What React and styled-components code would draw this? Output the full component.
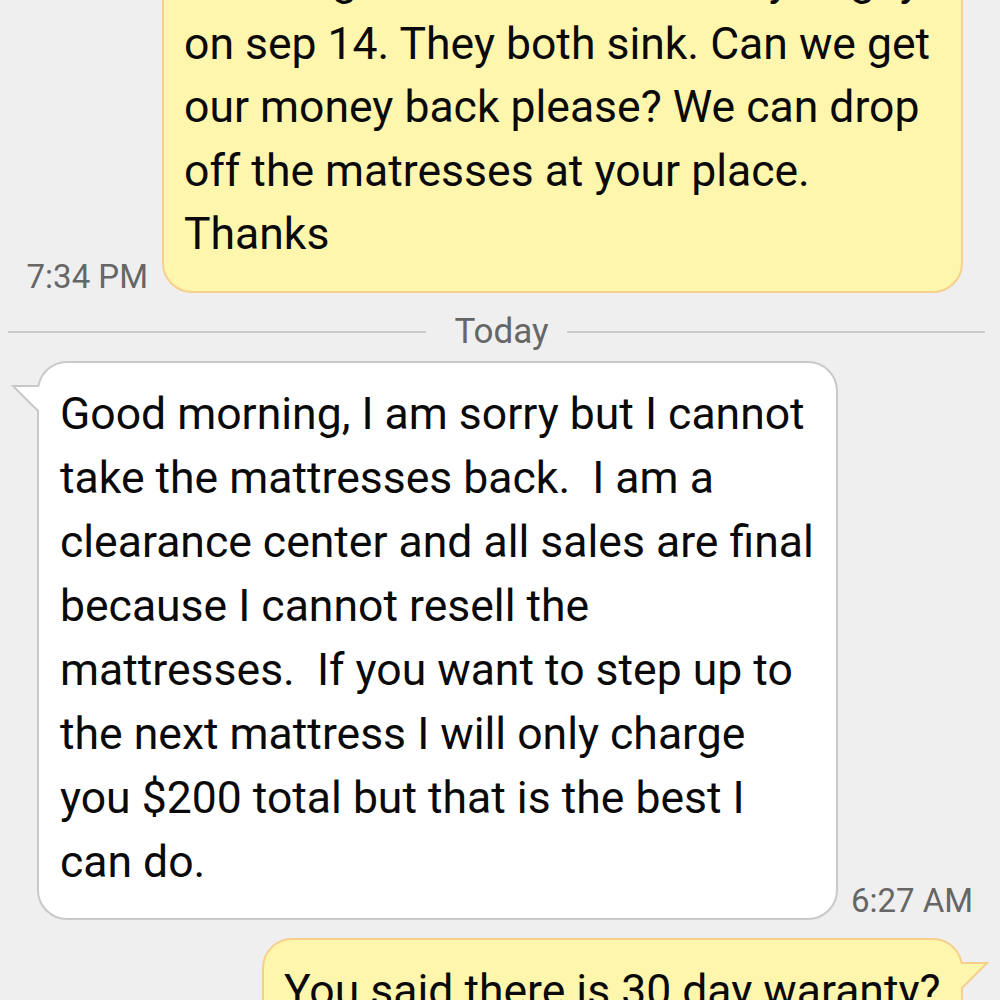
import React from "react";
import styled, { createGlobalStyle } from "styled-components";

const Global = createGlobalStyle`
  html, body { margin: 0; padding: 0; background: #efefef; }
  body { font-family: Roboto, "Noto Sans", Arial, sans-serif; overflow: hidden; }
`;

const Page = styled.div`
  width: 1000px;
  height: 1000px;
  overflow: hidden;
  display: flex;
  flex-direction: column;
`;

const Thread = styled.div`
  display: flex;
  flex-direction: column;
  margin-top: -73px;
`;

const Row = styled.div`
  display: flex;
  align-items: flex-end;
  gap: ${(p) => (p.$mine ? "14px" : "13px")};
  justify-content: ${(p) => (p.$mine ? "flex-end" : "flex-start")};
  padding: ${(p) => (p.$mine ? "0 37px 0 0" : "0 0 0 37px")};
  margin-top: ${(p) => p.$top || 0}px;
`;

const Bubble = styled.div`
  position: relative;
  box-sizing: border-box;
  width: ${(p) => (p.$width ? `${p.$width}px` : "auto")};
  padding: ${(p) => (p.$mine ? "20px 20px 24px 20px" : "19px 21px 24px 21px")};
  border-radius: 30px;
  border: 2px solid ${(p) => (p.$mine ? "#f6cf8c" : "#c9c9c9")};
  background: ${(p) => (p.$mine ? "#fff6ae" : "#ffffff")};
  color: #0a0a0a;
  font-size: 44.5px;
  line-height: ${(p) => (p.$mine ? "63.5px" : "64px")};
  white-space: pre;
`;

const Tail = styled.svg`
  position: absolute;
  top: 22px;
  ${(p) => (p.$mine ? "right: -28px; transform: scaleX(-1);" : "left: -28px;")}
  width: 28px;
  height: 28px;
  overflow: visible;
`;

const Time = styled.div`
  font-size: 33px;
  line-height: 32px;
  color: #666666;
  margin-bottom: ${(p) => p.$drop || 0}px;
  white-space: nowrap;
`;

const Divider = styled.div`
  display: grid;
  grid-template-columns: 1fr auto 1fr;
  align-items: center;
  padding: 0 15px 0 8px;
  height: 40px;
  margin-top: 19px;
`;

const Rule = styled.div`
  height: 2px;
  background: #cbcbcb;
`;

const DayLabel = styled.div`
  font-size: 35px;
  color: #666666;
  line-height: 40px;
  padding: 0 18px 0 28px;
`;

function BubbleTail({ mine }) {
  const fill = mine ? "#fff6ae" : "#ffffff";
  const stroke = mine ? "#f6cf8c" : "#c9c9c9";
  return (
    <Tail $mine={mine} viewBox="0 0 28 28">
      <polygon points="2,1 30,1 30,27" fill={fill} />
      <polyline points="28,1 2,1 27,26" fill="none" stroke={stroke} strokeWidth="2" strokeLinejoin="miter" />
    </Tail>
  );
}

function Lines({ lines }) {
  return lines.map((l, i) => (
    <React.Fragment key={i}>
      {l}
      {i < lines.length - 1 && "\n"}
    </React.Fragment>
  ));
}

export default function App() {
  return (
    <Page>
      <Global />
      <Thread>
        <Row $mine>
          <Time $drop={0}>7:34 PM</Time>
          <Bubble $mine $width={801}>
            <Lines
              lines={[
                "We bought 2 matresses from you guys",
                "on sep 14. They both sink. Can we get",
                "our money back please? We can drop",
                "off the matresses at your place.",
                "Thanks",
              ]}
            />
          </Bubble>
        </Row>
        <Divider>
          <Rule />
          <DayLabel>Today</DayLabel>
          <Rule />
        </Divider>
        <Row $top={9}>
          <Bubble $width={801}>
            <BubbleTail />
            <Lines
              lines={[
                "Good morning, I am sorry but I cannot",
                "take the mattresses back.  I am a",
                "clearance center and all sales are final",
                "because I cannot resell the",
                "mattresses.  If you want to step up to",
                "the next mattress I will only charge",
                "you $200 total but that is the best I",
                "can do.",
              ]}
            />
          </Bubble>
          <Time $drop={3}>6:27 AM</Time>
        </Row>
        <Row $mine $top={18}>
          <Bubble $mine $width={701}>
            <BubbleTail mine />
            <Lines lines={["You said there is 30 day waranty?", "What is it for then?"]} />
          </Bubble>
        </Row>
      </Thread>
    </Page>
  );
}
